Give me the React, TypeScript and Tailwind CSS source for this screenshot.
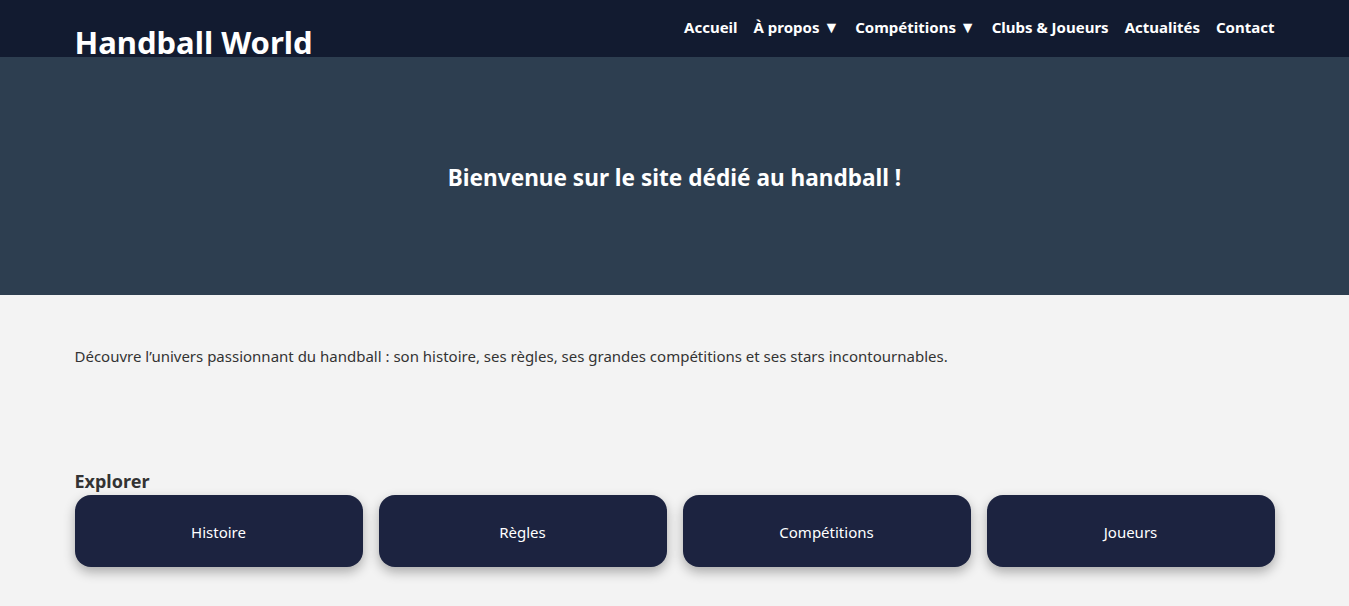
import React from "react";

const font = { fontFamily: '"Segoe UI", "Noto Sans", "Open Sans", sans-serif' };

export default function App() {
  const cards = ["Histoire", "Règles", "Compétitions", "Joueurs"];
  return (
    <div className="min-h-[606px] bg-[#f3f3f3]" style={font}>
      <header className="bg-[#121b30] h-[57px]">
        <div className="max-w-[1200px] mx-auto flex justify-between h-full">
          <h1 className="text-white font-bold text-[31px] leading-[38px] mt-[23px]">Handball World</h1>
          <nav className="flex items-center gap-4 text-white font-bold text-[15px] leading-[20px] h-full pb-[3px]">
            <a>Accueil</a>
            <a>À propos <span className="text-[16px] leading-[0]">▼</span></a>
            <a>Compétitions <span className="text-[16px] leading-[0]">▼</span></a>
            <a>Clubs &amp; Joueurs</a>
            <a>Actualités</a>
            <a>Contact</a>
          </nav>
        </div>
      </header>
      <section className="bg-[#2d3e50] h-[238px] flex items-center justify-center">
        <h2 className="text-white font-bold text-[22.6px] mt-[4px]">Bienvenue sur le site dédié au handball !</h2>
      </section>
      <main className="max-w-[1200px] mx-auto">
        <p className="text-[#333] text-[15px] mt-[50px]">
          Découvre l’univers passionnant du handball : son histoire, ses règles, ses grandes compétitions et ses stars incontournables.
        </p>
        <h3 className="text-[#333] font-bold text-[18px] mt-[101px] leading-[24px]">Explorer</h3>
        <div className="grid grid-cols-4 gap-4 mt-[2px]">
          {cards.map((c) => (
            <div key={c} className="bg-[#1c2340] rounded-2xl h-[72px] pt-[3px] flex items-center justify-center text-white text-[15px] shadow-[0_5px_12px_rgba(0,0,0,0.3)]">
              {c}
            </div>
          ))}
        </div>
      </main>
    </div>
  );
}
